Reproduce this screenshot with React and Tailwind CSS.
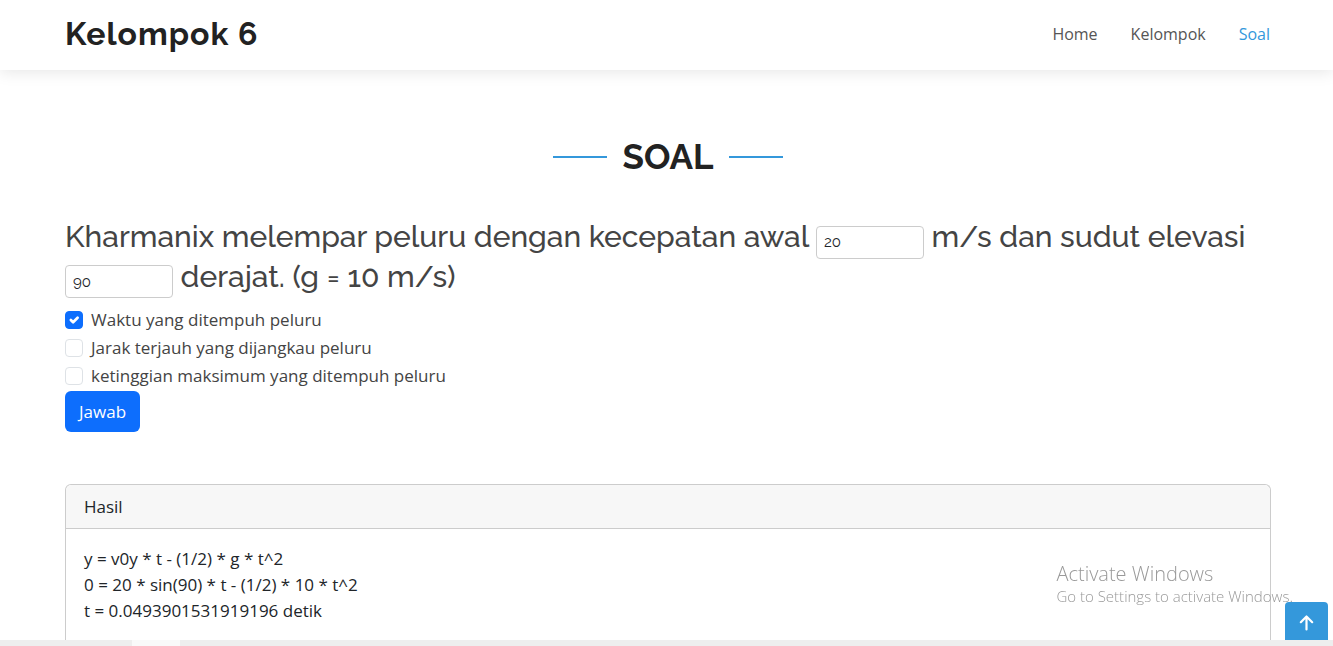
import { useState } from "react";

const links = [
  { label: "Home", href: "#home" },
  { label: "Kelompok", href: "#kelompok" },
  { label: "Soal", href: "#soal", active: true },
];

const questions = [
  { id: "waktu", label: "Waktu yang ditempuh peluru" },
  { id: "jarak", label: "Jarak terjauh yang dijangkau peluru" },
  { id: "tinggi", label: "ketinggian maksimum yang ditempuh peluru" },
];

function Header() {
  return (
    <header className="relative z-10 flex h-[70px] shrink-0 items-center justify-between bg-white pr-[63px] pb-0.5 pl-[65px] shadow-[0_2px_15px_rgba(0,0,0,0.1)]">
      <a href="#home" className="font-[Raleway,Lato,sans-serif] text-[32px] leading-10 font-bold tracking-[1px] text-[#222222]">
        Kelompok 6
      </a>
      <nav className="flex gap-[33px]">
        {links.map((l) => (
          <a key={l.label} href={l.href} className={l.active ? "text-base text-[#3498db]" : "text-base text-[#555555]"}>
            {l.label}
          </a>
        ))}
      </nav>
    </header>
  );
}

function NumberField({ label, value, onChange }) {
  return (
    <input
      type="text"
      inputMode="decimal"
      aria-label={label}
      value={value}
      onChange={(e) => onChange(e.target.value)}
      className="inline-block h-[33px] w-[108px] rounded border border-[#cccccc] bg-white px-[7px] align-baseline text-[15px] leading-5 font-normal text-[#212529]"
    />
  );
}

function Check({ id, label, checked, onChange }) {
  return (
    <div className="flex h-7 items-center gap-2">
      <span className="grid size-[18px]">
        <input
          id={id}
          type="checkbox"
          checked={checked}
          onChange={onChange}
          className="peer col-start-1 row-start-1 size-[18px] appearance-none rounded border border-[#dee2e6] bg-white checked:border-[#0d6efd] checked:bg-[#0d6efd]"
        />
        <svg viewBox="0 0 20 20" fill="none" stroke="white" strokeWidth="3" strokeLinecap="round" strokeLinejoin="round" aria-hidden="true" className="pointer-events-none invisible col-start-1 row-start-1 size-[18px] peer-checked:visible">
          <path d="m6.5 10 2.5 2.5 5-5" />
        </svg>
      </span>
      <label htmlFor={id} className="text-[17px] leading-7 text-[#444444]">{label}</label>
    </div>
  );
}

export default function App() {
  const [speed, setSpeed] = useState("20");
  const [angle, setAngle] = useState("90");
  const [picked, setPicked] = useState({ waktu: true, jarak: false, tinggi: false });

  return (
    <div className="relative flex min-h-screen flex-col bg-white font-['Open_Sans',sans-serif] text-[#444444]">
      <Header />
      <main id="soal" className="flex grow flex-col pr-[62px] pl-[65px] pt-16">
        <div className="flex items-center justify-center gap-4">
          <span className="h-0.5 w-[54px] bg-[#3498db]" />
          <h2 className="font-[Raleway,Lato,sans-serif] text-[35px] leading-[46px] font-bold text-[#222222]">SOAL</h2>
          <span className="h-0.5 w-[54px] bg-[#3498db]" />
        </div>
        <form className="pt-[39px]" onSubmit={(e) => e.preventDefault()}>
          <h3 className="mb-2 font-[Raleway,Lato,sans-serif] text-[30px] leading-9 font-medium">
            Kharmanix melempar peluru dengan kecepatan awal{" "}
            <NumberField label="Kecepatan awal" value={speed} onChange={setSpeed} /> m/s dan sudut elevasi{" "}
            <NumberField label="Sudut elevasi" value={angle} onChange={setAngle} /> derajat. (g = 10 m/s)
          </h3>
          <div className="pb-px">
            {questions.map((q) => (
              <Check
                key={q.id}
                id={q.id}
                label={q.label}
                checked={picked[q.id]}
                onChange={() => setPicked({ ...picked, [q.id]: !picked[q.id] })}
              />
            ))}
          </div>
          <button type="submit" className="h-[41px] rounded-md bg-[#0d6efd] px-3.5 text-[17px] text-white">Jawab</button>
        </form>
        <section className="mt-[52px] flex grow flex-col rounded-t-md border border-b-0 border-[#cccccc] text-[#212529]">
          <h4 className="rounded-t-md border-b border-[#cccccc] bg-[#f7f7f7] px-[18px] py-2 text-[17px] leading-[27px]">Hasil</h4>
          <div className="grow px-[18px] pt-[17px] text-[17px] leading-[26px]">
            <p>y = v0y * t - (1/2) * g * t^2</p>
            <p>0 = 20 * sin(90) * t - (1/2) * 10 * t^2</p>
            <p>t = 0.0493901531919196 detik</p>
          </div>
        </section>
      </main>
      <footer className="flex h-1.5 shrink-0 bg-[#eeeeee] pl-[132px]">
        <span className="w-12 bg-[#f9f9f9]" />
      </footer>
      <a href="#home" aria-label="Kembali ke atas" className="fixed right-[5px] bottom-1.5 z-20 flex h-[38px] w-[43px] items-center justify-center rounded-t bg-[#3498db] pt-1">
        <svg viewBox="0 0 18 18" fill="none" stroke="white" strokeWidth="2.2" strokeLinecap="round" strokeLinejoin="round" aria-hidden="true" className="size-[18px]">
          <path d="M8.5 15.5V2.5M2.8 8.2l5.7-5.7 5.7 5.7" />
        </svg>
      </a>
      <aside className="pointer-events-none fixed right-10 bottom-10 z-30 font-light text-[#999999]">
        <p className="text-[20px] leading-6">Activate Windows</p>
        <p className="text-[15px] leading-5">Go to Settings to activate Windows.</p>
      </aside>
    </div>
  );
}
